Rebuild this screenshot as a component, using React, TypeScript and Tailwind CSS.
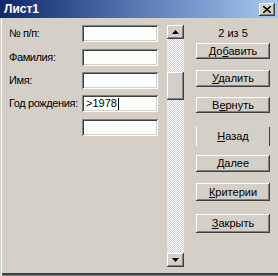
const raised =
  "shadow-[inset_-1px_-1px_#404040,inset_1px_1px_#ffffff,inset_-2px_-2px_#808080]";
const sunken =
  "shadow-[inset_1px_1px_#808080,inset_-1px_-1px_#ffffff,inset_2px_2px_#404040,inset_-2px_-2px_#d4d0c8]";

const rows = [
  { label: "№ п/п:", value: "", cls: "mt-0" },
  { label: "Фамилия:", value: "", cls: "mt-[7px]" },
  { label: "Имя:", value: "", cls: "mt-[6px]" },
  { label: "Год рождения:", value: ">1978", cls: "mt-[6px]", caret: true },
  { label: "", value: "", cls: "mt-[7px]" },
];

const Arrow = ({ down }: { down?: boolean }) => (
  <svg width="7" height="4" viewBox="0 0 7 4">
    <path d={down ? "M0 0h7L3.5 4z" : "M0 4h7L3.5 0z"} fill="#000" />
  </svg>
);

const App = () => {
  return (
    <div className="w-[278px] h-[276px] bg-[#d4d0c8] flex flex-col font-['Liberation_Sans',Arial,sans-serif] text-[11px] text-black overflow-hidden">
      {/* title bar */}
      <div className="h-[18px] flex items-center bg-linear-to-r from-[#10276c] via-[#5a7ab4] to-[#a6caf0] pl-[4px] pr-[3px]">
        <span className="text-white font-bold text-[12px] leading-none">Лист1</span>
        <div
          className={`ml-auto w-[16px] h-[13px] bg-[#d4d0c8] flex items-center justify-center ${raised}`}
        >
          <svg width="8" height="7" viewBox="0 0 8 7">
            <path d="M0 0l8 7M8 0L0 7" stroke="#000" strokeWidth="1.6" />
          </svg>
        </div>
      </div>

      {/* body */}
      <div className="flex-1 flex border-l border-l-white ml-px shadow-[inset_0_-1px_#808080,inset_0_-3px_#404040] pt-[7px]">
        {/* form */}
        <div className="flex flex-col pl-[7px] w-[157px]">
          {rows.map((r, i) => (
            <div key={i} className={`flex items-center h-[17px] ${r.cls}`}>
              <span className="w-[73px] whitespace-nowrap leading-none tracking-[-0.4px]">
                {r.label}
              </span>
              <div
                className={`w-[76px] h-[17px] bg-[#fcfffc] flex items-center pl-[4px] ${sunken}`}
              >
                {r.value}
                {r.caret && <span className="w-px h-[12px] bg-black ml-[1px]" />}
              </div>
            </div>
          ))}
        </div>

        {/* scrollbar */}
        <div className="ml-[8px] w-[17px] h-[242px] flex flex-col bg-[repeating-conic-gradient(#d4d0c8_0_25%,#ffffff_0_50%)] bg-[length:2px_2px]">
          <div className={`h-[14px] bg-[#d4d0c8] flex items-center justify-center ${raised}`}>
            <Arrow />
          </div>
          <div className="h-[33px]" />
          <div className={`h-[28px] bg-[#d4d0c8] ${raised}`} />
          <div className="flex-1" />
          <div className={`h-[14px] bg-[#d4d0c8] flex items-center justify-center ${raised}`}>
            <Arrow down />
          </div>
        </div>

        {/* buttons */}
        <div className="ml-[12px] w-[74px] flex flex-col">
          <div className="h-[17px] flex items-center justify-center leading-none">2 из 5</div>
          <button className={`mt-[1px] h-[16px] bg-[#d4d0c8] leading-none ${raised}`}>
            До<u>б</u>авить
          </button>
          <button className={`mt-[11px] h-[17px] bg-[#d4d0c8] leading-none ${raised}`}>
            <u>У</u>далить
          </button>
          <button className={`mt-[10px] h-[16px] bg-[#d4d0c8] leading-none ${raised}`}>
            В<u>е</u>рнуть
          </button>
          <button className="mt-[14px] h-[19px] bg-[#d4d0c8] leading-none border-l border-l-white border-r border-r-[#404040]">
            <u>Н</u>азад
          </button>
          <button className={`mt-[9px] h-[17px] bg-[#d4d0c8] leading-none ${raised}`}>
            <u>Д</u>алее
          </button>
          <button className={`mt-[11px] h-[18px] bg-[#d4d0c8] leading-none ${raised}`}>
            <u>К</u>ритерии
          </button>
          <button className={`mt-[13px] h-[19px] bg-[#d4d0c8] leading-none ${raised}`}>
            <u>З</u>акрыть
          </button>
        </div>
      </div>
    </div>
  );
};

export default App;
